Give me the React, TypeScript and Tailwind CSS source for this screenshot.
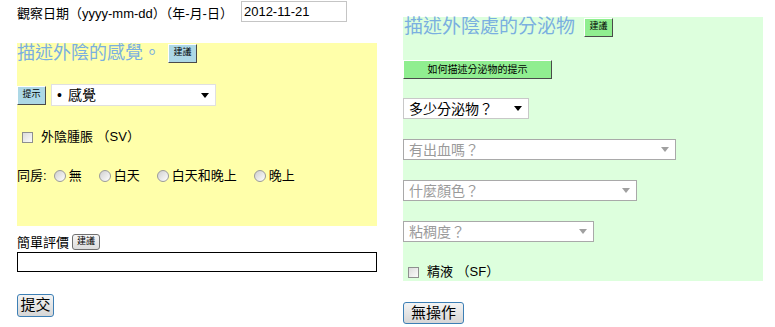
import React from "react";

const font = "font-['Liberation_Sans','Noto_Sans_CJK_TC',sans-serif]";

function Arrow({ gray }: { gray?: boolean }) {
  return (
    <svg width="8" height="5" viewBox="0 0 8 5" className="shrink-0">
      <path d="M0 0h8L4 5z" fill={gray ? "#a0a0a0" : "#000"} />
    </svg>
  );
}

function Select({
  label,
  width,
  disabled,
  dot,
}: {
  label: string;
  width: string;
  disabled?: boolean;
  dot?: boolean;
}) {
  return (
    <div
      className={`flex h-[21px] items-center justify-between border bg-white pl-[5px] pr-[6px] text-[14px] ${width} ${
        disabled ? "border-[#a9a9a9] text-[#9a9a9a]" : "border-[#c8c8c8] text-black"
      }`}
    >
      <span className="leading-none">
        {dot && <span className="mr-[6px]">•</span>}
        {label}
      </span>
      <Arrow gray={disabled} />
    </div>
  );
}

function Checkbox() {
  return (
    <span className="inline-block h-[11px] w-[11px] shrink-0 border border-[#8e8f8f] bg-gradient-to-br from-[#dcdcdc] to-[#fbfbfb]" />
  );
}

function Radio({ label }: { label: string }) {
  return (
    <span className="flex items-center">
      <span className="inline-block h-[12px] w-[12px] rounded-full border border-[#9a9a9a] bg-gradient-to-br from-[#cfcfcf] to-[#ffffff]" />
      <span className="ml-[3px]">{label}</span>
    </span>
  );
}

function OutsetBtn({ label, bg, className = "" }: { label: string; bg: string; className?: string }) {
  return (
    <div
      className={`flex h-[19px] items-center justify-center border border-t-white border-l-white border-r-[#4a4a4a] border-b-[#4a4a4a] text-[9px] text-black ${bg} ${className}`}
    >
      {label}
    </div>
  );
}

function PlainBtn({ label, className = "" }: { label: string; className?: string }) {
  return (
    <div
      className={`flex items-center justify-center rounded-[3px] border border-[#3d7fb5] bg-gradient-to-b from-[#f4f4f4] to-[#d6d6d6] text-[15px] text-black ${className}`}
    >
      {label}
    </div>
  );
}

export default function App() {
  return (
    <div className={`flex h-[327px] w-[775px] gap-[26px] bg-white pl-[17px] text-[13px] text-black ${font}`}>
      {/* left */}
      <div className="flex w-[360px] flex-col">
        <div className="flex h-[23px] items-start">
          <span className="pt-[6px] leading-[15px]">觀察日期（yyyy-mm-dd）（年-月-日）</span>
          <div className="ml-[8px] mt-[1px] flex h-[21px] w-[106px] items-center border border-[#c5c5c5] pl-[2px] text-[13px]">
            2012-11-21
          </div>
        </div>

        <div className="mt-[20px] flex h-[183px] flex-col bg-[#ffffaa]">
          <div className="flex h-[20px] items-center">
            <span className="text-[18px] leading-[20px] text-[#7aafe0]">描述外陰的感覺。</span>
            <OutsetBtn label="建議" bg="bg-[#add8e6]" className="ml-[7px] w-[29px]" />
          </div>

          <div className="mt-[21px] flex h-[22px] items-center">
            <OutsetBtn label="提示" bg="bg-[#add8e6]" className="h-[18px] w-[29px]" />
            <div className="ml-[5px] flex h-[22px] w-[165px] items-center justify-between border border-[#e0e0e0] bg-white pl-[5px] pr-[6px] text-[14px]">
              <span className="leading-none">
                <span className="mr-[6px]">•</span>感覺
              </span>
              <Arrow />
            </div>
          </div>

          <div className="ml-[5px] mt-[23px] flex h-[16px] items-center">
            <Checkbox />
            <span className="ml-[8px]">外陰腫脹 （SV）</span>
          </div>

          <div className="mt-[23px] flex h-[16px] items-center">
            <span>同房:</span>
            <div className="ml-[7px] flex items-center gap-[17px]">
              <Radio label="無" />
              <Radio label="白天" />
              <Radio label="白天和晚上" />
              <Radio label="晚上" />
            </div>
          </div>
        </div>

        <div className="mt-[7px] flex h-[17px] items-center">
          <span className="pt-[3px]">簡單評價</span>
          <div className="ml-[3px] flex h-[16px] w-[28px] items-center justify-center rounded-[3px] border border-[#707070] bg-gradient-to-b from-[#f6f6f6] to-[#dcdcdc] text-[9px]">
            建議
          </div>
        </div>
        <div className="mt-[2px] h-[20px] w-[360px] border border-black bg-white" />

        <PlainBtn label="提交" className="mt-[22px] h-[23px] w-[37px]" />
      </div>

      {/* right */}
      <div className="flex w-[360px] flex-col">
        <div className="mt-[17px] flex h-[264px] flex-col bg-[#ddffdd]">
          <div className="flex h-[20px] items-center">
            <span className="pl-[1px] text-[19px] leading-[20px] text-[#7aafe0]">描述外陰處的分泌物</span>
            <OutsetBtn label="建議" bg="bg-[#90ee90]" className="ml-[9px] w-[29px]" />
          </div>

          <OutsetBtn label="如何描述分泌物的提示" bg="bg-[#90ee90]" className="mt-[23px] w-[149px] text-[10px]" />

          <div className="mt-[19px]">
            <Select label="多少分泌物？" width="w-[126px]" />
          </div>
          <div className="mt-[20px]">
            <Select label="有出血嗎？" width="w-[273px]" disabled />
          </div>
          <div className="mt-[20px]">
            <Select label="什麼顏色？" width="w-[234px]" disabled />
          </div>
          <div className="mt-[20px]">
            <Select label="粘稠度？" width="w-[191px]" disabled />
          </div>

          <div className="ml-[5px] mt-[23px] flex h-[14px] items-center">
            <Checkbox />
            <span className="ml-[8px]">精液 （SF）</span>
          </div>
        </div>

        <PlainBtn label="無操作" className="mt-[21px] h-[22px] w-[61px]" />
      </div>
    </div>
  );
}
